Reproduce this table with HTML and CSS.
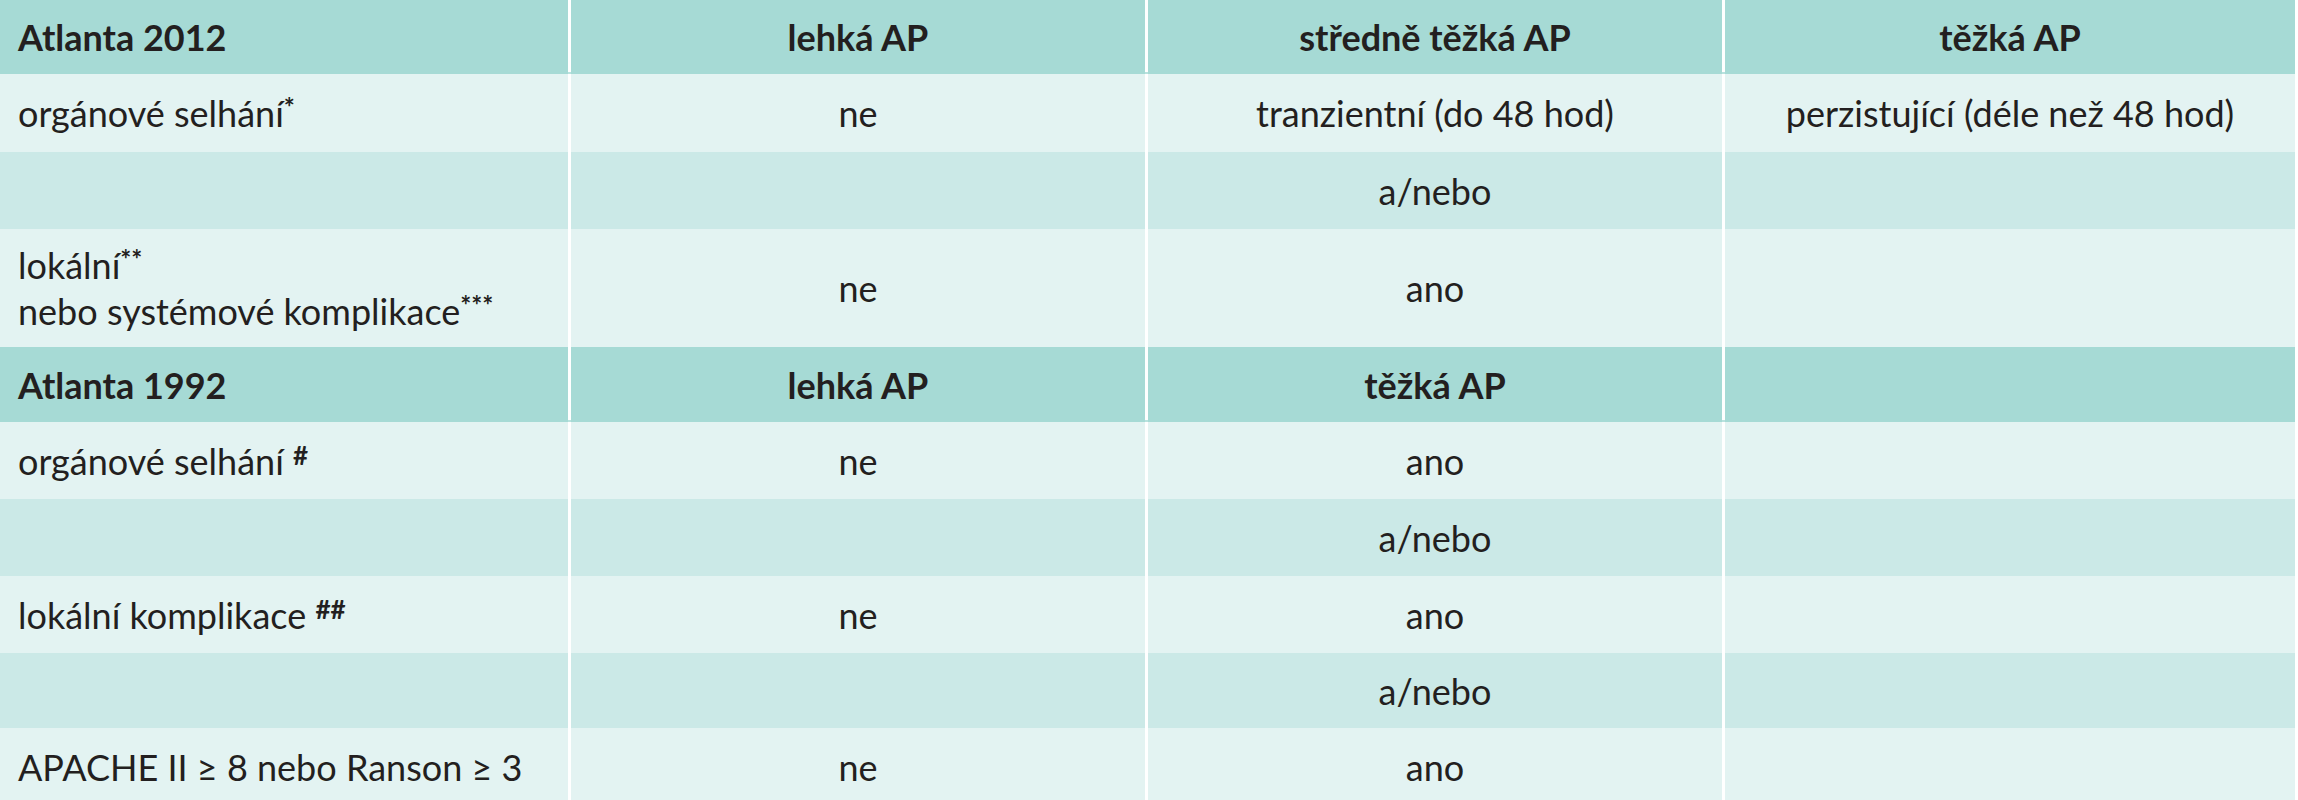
FILE: index.html
```html
<!DOCTYPE html>
<html lang="cs">
<head>
<meta charset="utf-8">
<title>Atlanta klasifikace AP</title>
<link rel="stylesheet" href="styles.css">
</head>
<body>
<div class="table">
  <div class="row head h1">
    <div class="cell first"><span class="txt">Atlanta 2012</span></div>
    <div class="cell"><span class="txt">lehká AP</span></div>
    <div class="cell"><span class="txt">středně těžká AP</span></div>
    <div class="cell"><span class="txt">těžká AP</span></div>
  </div>
  <div class="row light r1">
    <div class="cell first"><span class="txt">orgánové selhání<span class="sup">*</span></span></div>
    <div class="cell"><span class="txt">ne</span></div>
    <div class="cell"><span class="txt">tranzientní (do 48 hod)</span></div>
    <div class="cell"><span class="txt">perzistující (déle než 48 hod)</span></div>
  </div>
  <div class="row dark">
    <div class="cell first"></div>
    <div class="cell"></div>
    <div class="cell"><span class="txt">a/nebo</span></div>
    <div class="cell"></div>
  </div>
  <div class="row light tall">
    <div class="cell first"><span class="txt">lokální<span class="sup">**</span><br>nebo systémové komplikace<span class="sup">***</span></span></div>
    <div class="cell"><span class="txt">ne</span></div>
    <div class="cell"><span class="txt">ano</span></div>
    <div class="cell"></div>
  </div>
  <div class="row head h2">
    <div class="cell first"><span class="txt">Atlanta 1992</span></div>
    <div class="cell"><span class="txt">lehká AP</span></div>
    <div class="cell"><span class="txt">těžká AP</span></div>
    <div class="cell"></div>
  </div>
  <div class="row light">
    <div class="cell first"><span class="txt">orgánové selhání <span class="sup">#</span></span></div>
    <div class="cell"><span class="txt">ne</span></div>
    <div class="cell"><span class="txt">ano</span></div>
    <div class="cell"></div>
  </div>
  <div class="row dark">
    <div class="cell first"></div>
    <div class="cell"></div>
    <div class="cell"><span class="txt">a/nebo</span></div>
    <div class="cell"></div>
  </div>
  <div class="row light">
    <div class="cell first"><span class="txt">lokální komplikace <span class="sup">##</span></span></div>
    <div class="cell"><span class="txt">ne</span></div>
    <div class="cell"><span class="txt">ano</span></div>
    <div class="cell"></div>
  </div>
  <div class="row dark short">
    <div class="cell first"></div>
    <div class="cell"></div>
    <div class="cell"><span class="txt">a/nebo</span></div>
    <div class="cell"></div>
  </div>
  <div class="row light">
    <div class="cell first"><span class="txt">APACHE II ≥ 8 nebo Ranson ≥ 3</span></div>
    <div class="cell"><span class="txt">ne</span></div>
    <div class="cell"><span class="txt">ano</span></div>
    <div class="cell"></div>
  </div>
</div>
</body>
</html>
```

FILE: styles.css
```css
html, body {
  margin: 0;
  padding: 0;
  background: #ffffff;
}

body {
  font-family: Lato, "Open Sans", sans-serif;
  font-size: 36px;
  color: #231f20;
  overflow: hidden;
}

.table {
  width: 2295px;
  display: flex;
  flex-direction: column;
}

.row {
  display: grid;
  grid-template-columns: 568px 574px 574px 570px;
  column-gap: 3px;
  height: 77px;
}

.row.r1 {
  height: 78px;
}

.row.short {
  height: 75px;
}

.row.tall {
  height: 118px;
}

.row.head {
  height: 74px;
  font-weight: 700;
  box-shadow: inset 0 -2px 0 #b9e2de;
}

.row.head.h2 {
  height: 75px;
}

.cell {
  display: flex;
  align-items: center;
  justify-content: center;
  text-align: center;
  padding: 0 18px;
}

.cell.first {
  justify-content: flex-start;
  text-align: left;
}

.txt {
  display: block;
  line-height: 46px;
  white-space: nowrap;
}

.head .cell {
  background: #a6dad5;
}

.light .cell {
  background: #e3f3f2;
}

.dark .cell {
  background: #cbe9e7;
}

.sup {
  font-size: 26px;
  line-height: 0;
  vertical-align: 10px;
  font-weight: 700;
}
```
